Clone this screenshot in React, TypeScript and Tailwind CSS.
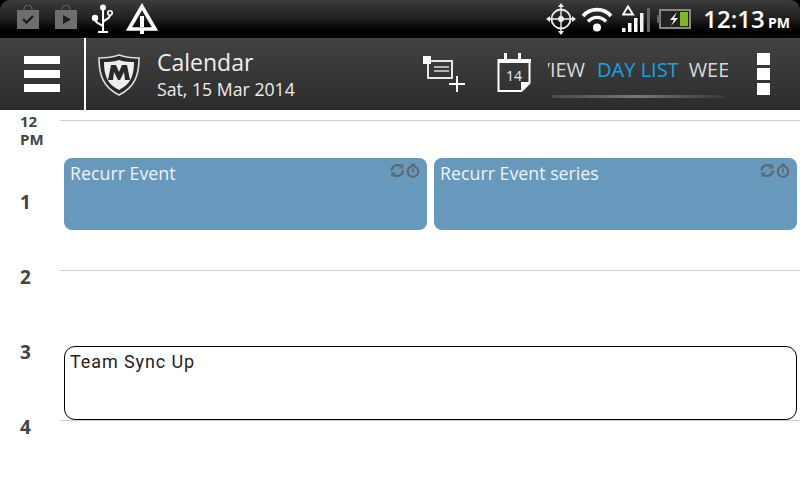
import React from "react";

const sans = "font-['Open_Sans','Noto_Sans',sans-serif]";

const StoreIcon = ({ play }: { play?: boolean }) => (
  <svg width="22" height="24" viewBox="0 0 22 24" className="mb-[4px] shrink-0">
    <path d="M7 6V4a4 4 0 0 1 8 0v2" fill="none" stroke="#666" strokeWidth="1" />
    <rect x="0" y="5" width="22" height="19" fill="#6e6e6e" />
    {play ? (
      <path d="M8 10l8 4.500-8 4.500z" fill="#1d1d1d" />
    ) : (
      <path d="M6 14l3.500 3.500L16 11" fill="none" stroke="#1d1d1d" strokeWidth="2.400" />
    )}
  </svg>
);

const UsbIcon = () => (
  <svg width="24" height="30" viewBox="0 0 24 30" className="shrink-0">
    <circle cx="13" cy="3.500" r="3" fill="#fff" />
    <path d="M13 5v23M8 28h10" stroke="#fff" strokeWidth="2" fill="none" />
    <circle cx="5" cy="14" r="3.200" fill="#fff" />
    <path d="M5 15c0 5 8 5 8 8" stroke="#fff" strokeWidth="2" fill="none" />
    <circle cx="20" cy="9" r="2.200" fill="none" stroke="#fff" strokeWidth="1.600" />
    <path d="M20 11c0 5-7 4-7 8" stroke="#fff" strokeWidth="2" fill="none" />
  </svg>
);

const WarnIcon = () => (
  <svg width="32" height="32" viewBox="0 0 32 32" className="shrink-0">
    <path d="M16 3.500L3 26H29z" fill="none" stroke="#fff" strokeWidth="3.600" />
    <rect x="14" y="13" width="4" height="11" fill="#fff" />
    <rect x="14" y="27" width="4" height="4" fill="#fff" />
  </svg>
);

const GpsIcon = () => (
  <svg width="30" height="32" viewBox="0 0 30 32" className="shrink-0">
    <circle cx="15" cy="16" r="9.500" fill="none" stroke="#eee" strokeWidth="1.800" />
    <circle cx="15" cy="16" r="3" fill="#eee" />
    <path d="M15 4v24M3 16h24" stroke="#eee" strokeWidth="1.400" />
    <path d="M15 0l3 4h-6zM15 32l3-4h-6zM0 16l4-3v6zM30 16l-4-3v6z" fill="#eee" />
  </svg>
);

const WifiIcon = () => (
  <svg width="32" height="26" viewBox="0 0 32 26" className="shrink-0">
    <path d="M2 10C9 1.500 23 1.500 30 10" fill="none" stroke="#fff" strokeWidth="3.600" />
    <path d="M7 15.500c5-5.500 13-5.500 18 0" fill="none" stroke="#fff" strokeWidth="3.400" />
    <circle cx="16" cy="21.500" r="4" fill="#fff" />
  </svg>
);

const SignalIcon = () => (
  <svg width="28" height="28" viewBox="0 0 28 28" className="shrink-0">
    <path d="M6 1.500L11 9.500H1z" fill="none" stroke="#fff" strokeWidth="2" />
    <rect x="0" y="23" width="3.500" height="4" fill="#fff" />
    <rect x="6" y="18" width="3.500" height="9" fill="#fff" />
    <rect x="12" y="13" width="3.500" height="14" fill="#fff" />
    <rect x="18" y="8" width="3.500" height="19" fill="#f0f0f0" />
    <rect x="25" y="3" width="3" height="24" fill="#666" />
  </svg>
);

const BatteryIcon = () => (
  <svg width="34" height="20" viewBox="0 0 34 20" className="shrink-0">
    <rect x="3" y="1" width="30" height="18" fill="#222" stroke="#888" strokeWidth="2" />
    <rect x="0" y="6" width="3" height="8" fill="#666" />
    <rect x="23" y="3" width="8" height="14" fill="#7fb81f" />
    <path d="M20 3l-7 8h4l-3 6 7-8h-4z" fill="#fff" />
  </svg>
);

const ShieldIcon = () => (
  <svg width="44" height="44" viewBox="0 0 44 44" className="shrink-0">
    <path d="M22 2C30 5 37 5 42 5C42 22 38 34 22 42C6 34 2 22 2 5C7 5 14 5 22 2z" fill="#2a2a2a" stroke="#ddd" strokeWidth="1.600" />
    <path d="M22 7C28 9 33 9 37 9C37 22 34 31 22 37C10 31 7 22 7 9C11 9 16 9 22 7z" fill="#eee" />
    <path d="M11 27l3-15h5l3 7 3-7h5l3 15h-5l-1-8-4 8h-2l-4-8-1 8z" fill="#2a2a2a" />
  </svg>
);

const NewEventIcon = () => (
  <svg width="42" height="36" viewBox="0 0 42 36" className="shrink-0">
    <rect x="5" y="5" width="24" height="17" fill="none" stroke="#e8e8e8" strokeWidth="2" />
    <rect x="0" y="0" width="8" height="8" fill="#fff" />
    <path d="M11 11h15M11 15h15" stroke="#ddd" strokeWidth="1.500" />
    <path d="M26 28h16M34 20v16" stroke="#fff" strokeWidth="2" />
  </svg>
);

const CalendarIcon = () => (
  <svg width="36" height="40" viewBox="0 0 36 40" className="shrink-0">
    <path d="M1.500 7h31v23l-8 8h-23z" fill="none" stroke="#fff" strokeWidth="2" />
    <rect x="1" y="6" width="33" height="4" fill="#fff" />
    <rect x="7" y="0" width="3" height="8" fill="#fff" />
    <rect x="21" y="0" width="3" height="8" fill="#fff" />
    <path d="M33 29l-9 0 0 9z" fill="#fff" />
    <text x="17" y="28" textAnchor="middle" fontSize="14" fill="#eee" fontFamily="'Open Sans',sans-serif">14</text>
  </svg>
);

const EventIcons = () => (
  <svg width="30" height="15" viewBox="0 0 30 15" className="shrink-0">
    <path d="M1.500 7.500a6 6 0 0 1 10-4M13 7.500a6 6 0 0 1-10 4" fill="none" stroke="#5f6468" strokeWidth="2" />
    <path d="M12.500 1v4h-4M2 14v-4h4" fill="none" stroke="#5f6468" strokeWidth="1.200" />
    <circle cx="23" cy="8.500" r="5.300" fill="none" stroke="#5f6468" strokeWidth="1.800" />
    <path d="M23 5.500v4M21 1.500h4" stroke="#5f6468" strokeWidth="1.500" />
  </svg>
);

const hours = [
  { label: "1", cls: "mt-[43px]" },
  { label: "2", cls: "mt-[53px]" },
  { label: "3", cls: "mt-[53px]" },
  { label: "4", cls: "mt-[53px]" },
];

const StatusBar = () => (
  <div className="h-[38px] bg-black">
    <div className="flex h-full items-center rounded-tl-[10px] rounded-tr-[10px] bg-gradient-to-b from-[#3c3c3c] via-[#1f1f1f] to-[#000000] pl-[17px] pr-[10px]">
      <div className="flex items-center gap-[16px]">
        <StoreIcon />
        <StoreIcon play />
      </div>
      <div className="ml-[13px]"><UsbIcon /></div>
      <div className="ml-[12px]"><WarnIcon /></div>
      <div className="ml-auto flex items-center">
        <GpsIcon />
        <div className="ml-[5px]"><WifiIcon /></div>
        <div className="ml-[9px]"><SignalIcon /></div>
        <div className="ml-[7px]"><BatteryIcon /></div>
        <span className={`${sans} ml-[12px] whitespace-nowrap text-[24px] font-semibold leading-none text-white`}>
          12:13 <span className="-ml-[3px] text-[14px] font-bold">PM</span>
        </span>
      </div>
    </div>
  </div>
);

const ActionBar = () => (
  <div className="flex h-[72px] items-center bg-gradient-to-b from-[#424242] to-[#2c2c2c]">
    <div className="flex h-full w-[84px] items-center justify-center">
      <div className="flex w-[36px] flex-col gap-[6px]">
        <div className="h-[8px] bg-white" />
        <div className="h-[8px] bg-white" />
        <div className="h-[8px] bg-white" />
      </div>
    </div>
    <div className="h-full w-[2px] bg-white" />
    <div className="ml-[11px] mt-[1px]"><ShieldIcon /></div>
    <div className={`${sans} ml-[16px] w-[138px] whitespace-nowrap text-white`}>
      <div className="text-[23px] leading-[30px] text-[#eeeeee]">Calendar</div>
      <div className="text-[17.700px] leading-[24px] text-[#eeeeee]">Sat, 15 Mar 2014</div>
    </div>
    <div className="ml-[128px]"><NewEventIcon /></div>
    <div className="ml-[32px] -mt-[3px]"><CalendarIcon /></div>
    <div className="ml-[15px] flex h-full w-[180px] flex-col overflow-hidden">
      <div className={`${sans} mt-[18px] flex h-[28px] items-center whitespace-nowrap text-[20px]`}>
        <span className="-ml-[10px] text-[#d8d8d8]">VIEW</span>
        <span className="ml-[12px] text-[#0ea5e9]">DAY LIST</span>
        <span className="ml-[10px] text-[#d8d8d8]">WEEK</span>
      </div>
      <div className="mx-[4px] mt-[11px] h-[3px] bg-gradient-to-r from-[#4a4a4a] via-[#777777] to-[#3a3a3a]" />
    </div>
    <div className="ml-[29px] flex w-[13px] flex-col gap-[3px]">
      <div className="h-[12px] bg-white" />
      <div className="h-[12px] bg-white" />
      <div className="h-[12px] bg-white" />
    </div>
  </div>
);

const Agenda = () => (
  <div className="flex h-[370px] overflow-hidden bg-white">
    <div className={`${sans} flex w-[60px] flex-col items-start pl-[20px] font-bold text-[#444444]`}>
      <div className="mt-[2px] text-[15px] leading-[18px]">
        <div>12</div>
        <div>PM</div>
      </div>
      {hours.map((h) => (
        <div key={h.label} className={`${h.cls} text-[19px] leading-[22px]`}>
          {h.label}
        </div>
      ))}
    </div>
    <div className="flex-1">
      <div className="mt-[10px] h-[1px] bg-[#cccccc]" />
      <div className="mt-[37px] flex gap-[7px] pl-[4px] pr-[3px]">
        {["Recurr Event", "Recurr Event series"].map((t) => (
          <div key={t} className="flex h-[72px] flex-1 items-start justify-between rounded-[8px] bg-[#6699bb] pl-[6px] pr-[7px]">
            <span className={`${sans} text-[17.800px] leading-[30px] text-[#f2f2f2]`}>{t}</span>
            <div className="mt-[5px]"><EventIcons /></div>
          </div>
        ))}
      </div>
      <div className="mt-[40px] h-[1px] bg-[#cccccc]" />
      <div className="mt-[75px] pl-[4px] pr-[3px]">
        <div className="h-[74px] rounded-[11px] border border-black bg-white pl-[5px]">
          <span className="font-['Roboto',sans-serif] text-[18px] leading-[30px] tracking-[0.9px] text-[#222222]">
            Team Sync Up
          </span>
        </div>
      </div>
      <div className="h-[1px] bg-[#cccccc]" />
    </div>
  </div>
);

export default function App() {
  return (
    <div className="h-[480px] w-[800px] overflow-hidden bg-white">
      <StatusBar />
      <ActionBar />
      <Agenda />
    </div>
  );
}
